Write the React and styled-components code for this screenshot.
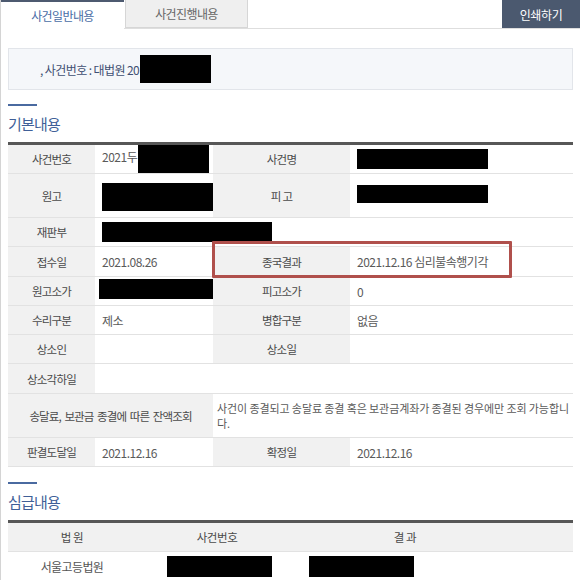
import React from "react";
import styled, { createGlobalStyle } from "styled-components";

const GlobalStyle = createGlobalStyle`
  html, body {
    margin: 0;
    padding: 0;
    background: #fff;
  }
  body {
    font-family: "Noto Sans CJK KR", "Noto Sans", sans-serif;
    color: #555;
  }
`;

const Page = styled.div`
  width: 579px;
  height: 580px;
  overflow: hidden;
  border-left: 1px solid #d4d4d4;
  background: #fff;
`;

const TabBar = styled.div`
  display: flex;
  height: 29px;
  border-bottom: 1px solid #dedede;
  box-sizing: border-box;
`;

const Tab = styled.div`
  width: 123px;
  box-sizing: border-box;
  display: flex;
  align-items: center;
  justify-content: center;
  font-size: 12px;
  letter-spacing: -0.6px;
  ${({ active }) =>
    active
      ? `
    background: #fff;
    color: #4a6da6;
    border-top: 2px solid #4d5a70;
    height: 29px;
    margin-bottom: -1px;
  `
      : `
    background: #efefef;
    color: #666;
    border: 1px solid #d6d6d6;
    border-top: none;
    margin-left: 1px;
  `}
`;

const Spacer = styled.div`
  flex: 1;
`;

const PrintButton = styled.div`
  width: 78px;
  background: #4b596f;
  color: #fff;
  font-size: 12px;
  letter-spacing: -0.4px;
  display: flex;
  align-items: center;
  justify-content: center;
`;

const Content = styled.div`
  padding: 0 7px 0 7px;
`;

const InfoBox = styled.div`
  margin-top: 19px;
  height: 42px;
  box-sizing: border-box;
  background: #f5f7fa;
  border: 1px solid #e2e5ea;
  display: flex;
  align-items: center;
  padding-left: 31px;
  font-size: 12px;
  letter-spacing: -0.6px;
  color: #3f4f72;
`;

const Redact = styled.span`
  display: inline-block;
  vertical-align: middle;
  background: #000;
  width: ${({ w }) => w}px;
  height: ${({ h }) => h}px;
  margin-left: ${({ ml }) => ml || 0}px;
  margin-top: ${({ mt }) => mt || 0}px;
`;

const SectionHead = styled.div`
  margin-top: ${({ top }) => top}px;
  display: flex;
  flex-direction: column;
`;

const Bar = styled.div`
  width: 29px;
  height: 2px;
  background: #4a6aa0;
`;

const Title = styled.div`
  margin-top: 8px;
  font-size: 15px;
  line-height: 20px;
  letter-spacing: -0.8px;
  color: #3f5f98;
`;

const TableWrap = styled.div`
  position: relative;
  margin-top: ${({ top }) => top}px;
`;

const Table = styled.table`
  width: 100%;
  border-collapse: collapse;
  table-layout: fixed;
  border-top: 3px solid #575757;
`;

const Row = styled.tr`
  height: ${({ h }) => h}px;
`;

const Label = styled.td`
  background: #f1f1f1;
  color: #4a4a4a;
  text-align: center;
  font-size: 11.5px;
  letter-spacing: ${({ tight }) => (tight ? -0.9 : -0.8)}px;
  word-spacing: ${({ tight }) => (tight ? 2 : 0)}px;
  border-bottom: 1px solid #e2e2e2;
  padding: 0;
  vertical-align: middle;
  white-space: nowrap;
`;

const Value = styled.td`
  color: #5a5a5a;
  font-size: 12px;
  letter-spacing: -0.5px;
  line-height: 15px;
  border-bottom: 1px solid #e2e2e2;
  padding: 0 0 0 ${({ pad }) => (pad === undefined ? 7 : pad)}px;
  vertical-align: middle;
  white-space: nowrap;
  overflow: hidden;
`;

const Notice = styled.div`
  font-size: 11px;
  letter-spacing: -0.1px;
  line-height: 15px;
`;

const HeadCell = styled.td`
  background: #f1f1f1;
  color: #4a4a4a;
  text-align: center;
  font-size: 11.5px;
  letter-spacing: -0.4px;
  border-bottom: 1px solid #e2e2e2;
  padding: 0;
`;

const Cell = styled.td`
  color: #555;
  font-size: 12px;
  letter-spacing: -0.6px;
  text-align: ${({ align }) => align || "center"};
  padding: 0 0 0 ${({ pad }) => pad || 0}px;
  border-bottom: 1px solid #e2e2e2;
  vertical-align: middle;
`;

const Highlight = styled.div`
  position: absolute;
  left: 204px;
  top: 99px;
  width: 300px;
  height: 37px;
  box-sizing: border-box;
  border: 3px solid #b0504c;
  border-radius: 1px;
  pointer-events: none;
`;

const App = () => {
  return (
    <>
      <GlobalStyle />
      <Page>
        <TabBar>
          <Tab active>사건일반내용</Tab>
          <Tab>사건진행내용</Tab>
          <Spacer />
          <PrintButton>인쇄하기</PrintButton>
        </TabBar>
        <Content>
          <InfoBox>
            , 사건번호 : 대법원 20
            <Redact w={71} h={28} ml={1} />
          </InfoBox>

          <SectionHead top={14}>
            <Bar />
            <Title>기본내용</Title>
          </SectionHead>

          <TableWrap top={8}>
            <Table>
              <colgroup>
                <col style={{ width: 87 }} />
                <col style={{ width: 118 }} />
                <col style={{ width: 137 }} />
                <col />
              </colgroup>
              <tbody>
                <Row h={27}>
                  <Label>사건번호</Label>
                  <Value>
                    2021두
                    <Redact w={71} h={28} ml={1} />
                  </Value>
                  <Label>사건명</Label>
                  <Value>
                    <Redact w={131} h={20} />
                  </Value>
                </Row>
                <Row h={44}>
                  <Label>원고</Label>
                  <Value>
                    <Redact w={112} h={28} mt={2} />
                  </Value>
                  <Label>피 고</Label>
                  <Value>
                    <Redact w={131} h={18} mt={-6} />
                  </Value>
                </Row>
                <Row h={29}>
                  <Label>재판부</Label>
                  <Value colSpan={3}>
                    <Redact w={170} h={20} />
                  </Value>
                </Row>
                <Row h={30}>
                  <Label>접수일</Label>
                  <Value>2021.08.26</Value>
                  <Label>종국결과</Label>
                  <Value>2021.12.16 심리불속행기각</Value>
                </Row>
                <Row h={29}>
                  <Label>원고소가</Label>
                  <Value pad={4}>
                    <Redact w={116} h={20} mt={-8} />
                  </Value>
                  <Label>피고소가</Label>
                  <Value>0</Value>
                </Row>
                <Row h={29}>
                  <Label>수리구분</Label>
                  <Value>제소</Value>
                  <Label>병합구분</Label>
                  <Value>없음</Value>
                </Row>
                <Row h={29}>
                  <Label>상소인</Label>
                  <Value />
                  <Label>상소일</Label>
                  <Value />
                </Row>
                <Row h={30}>
                  <Label>상소각하일</Label>
                  <Value colSpan={3} />
                </Row>
                <Row h={44}>
                  <Label colSpan={2} tight>
                    송달료, 보관금 종결에 따른 잔액조회
                  </Label>
                  <Value colSpan={2} pad={4}>
                    <Notice>
                      사건이 종결되고 송달료 종결 혹은 보관금계좌가 종결된 경우에만 조회 가능합니
                    </Notice>
                    <Notice>다.</Notice>
                  </Value>
                </Row>
                <Row h={29}>
                  <Label>판결도달일</Label>
                  <Value>2021.12.16</Value>
                  <Label>확정일</Label>
                  <Value>2021.12.16</Value>
                </Row>
              </tbody>
            </Table>
            <Highlight />
          </TableWrap>

          <SectionHead top={15}>
            <Bar />
            <Title>심급내용</Title>
          </SectionHead>

          <TableWrap top={8}>
            <Table>
              <colgroup>
                <col style={{ width: 128 }} />
                <col style={{ width: 162 }} />
                <col style={{ width: 214 }} />
                <col />
              </colgroup>
              <tbody>
                <Row h={30}>
                  <HeadCell>법 원</HeadCell>
                  <HeadCell>사건번호</HeadCell>
                  <HeadCell>결 과</HeadCell>
                  <HeadCell />
                </Row>
                <Row h={29}>
                  <Cell>서울고등법원</Cell>
                  <Cell>
                    <Redact w={105} h={21} ml={5} />
                  </Cell>
                  <Cell align="left" pad={11}>
                    <Redact w={105} h={21} />
                  </Cell>
                  <Cell />
                </Row>
              </tbody>
            </Table>
          </TableWrap>
        </Content>
      </Page>
    </>
  );
};

export default App;
